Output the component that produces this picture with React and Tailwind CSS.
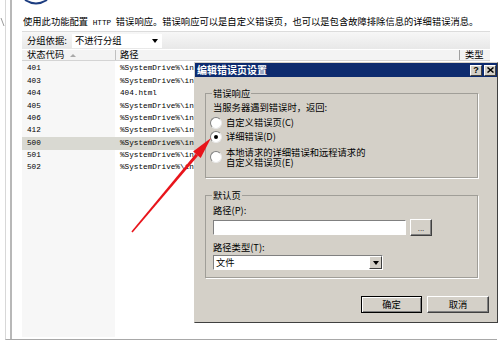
import React from 'react'

const rows = [
  { code: '401', path: '%SystemDrive%\\in' },
  { code: '403', path: '%SystemDrive%\\in' },
  { code: '404', path: '404.html' },
  { code: '405', path: '%SystemDrive%\\in' },
  { code: '406', path: '%SystemDrive%\\in' },
  { code: '412', path: '%SystemDrive%\\in' },
  { code: '500', path: '%SystemDrive%\\in', sel: true },
  { code: '501', path: '%SystemDrive%\\in' },
  { code: '502', path: '%SystemDrive%\\in' },
]

export default function App() {
  return (
    <div className="relative w-[500px] h-[342px] bg-white overflow-hidden text-black font-['Noto_Sans_CJK_SC',sans-serif]">
      <div className="flex h-[340px]">
        {/* left edge */}
        <div className="w-[5px] pt-[18px]">
          <svg width="5" height="9" className="block">
            <path d="M1 0 L4 8" stroke="#9a9a9a" strokeWidth="1" />
          </svg>
        </div>
        <div className="flex w-[492px] border-l border-b border-l-[#d8d8d8] border-b-[#a8a8a8]">
          <div className="w-[4px]" />
          <div className="w-[2px] bg-[#b8b8b8]" />
          <div className="flex-1 min-w-0 pl-[10px] pr-[7px] flex flex-col">

            {/* header text */}
            <div className="h-[31px] flex flex-col">
              <svg width="24" height="5" className="block ml-[2px]">
                <path d="M1 0 Q12 7 23 0" stroke="#1c3c80" strokeWidth="2" fill="none" />
              </svg>
              <div className="mt-[9px] pl-[1px] text-[9.3px] leading-[14px] whitespace-nowrap">
                使用此功能配置<span className="font-['Liberation_Mono',monospace] text-[7.7px]"> HTTP </span>错误响应。错误响应可以是自定义错误页，也可以是包含故障排除信息的详细错误消息。
              </div>
            </div>

            {/* group bar */}
            <div className="h-[18px] flex items-center px-[5px] text-[9.3px] leading-none bg-gradient-to-b from-[#f7f7f7] to-[#e8e8e8] border-t border-[#dcdcdc]">
              <span className="w-[45px]">分组依据:</span>
              <div className="w-[90px] h-[14px] bg-white flex items-center justify-between pl-[3px] pr-[4px]">
                <span>不进行分组</span>
                <span className="w-0 h-0 border-l-[3px] border-r-[3px] border-t-[4px] border-l-transparent border-r-transparent border-t-black" />
              </div>
            </div>

            {/* column headers */}
            <div className="mt-[1px] h-[11px] flex items-stretch bg-[#f3f3f3] border-b border-[#d4d4d4] text-[9.3px] leading-none">
              <div className="w-[93px] pl-[5px] flex items-center">
                <span>状态代码</span>
                <span className="ml-[6px] w-0 h-0 border-l-[3px] border-r-[3px] border-b-[3px] border-l-transparent border-r-transparent border-b-[#a8a8a8]" />
              </div>
              <div className="w-[344px] border-l border-[#c0c0c0] pl-[4px] flex items-center">路径</div>
              <div className="flex-1 border-l border-[#a0a0a0] pl-[5px] flex items-center">类型</div>
            </div>

            {/* rows */}
            <div className="flex-1 flex flex-col">
              <div className="grid grid-cols-[93px_1fr] h-[2px]">
                <div className="bg-[#f7f7f7]" />
                <div />
              </div>
              {rows.map(r => (
                <div key={r.code}
                     className={`grid grid-cols-[93px_1fr] h-[12.4px] font-['Liberation_Mono',monospace] text-[7.7px] leading-none ${r.sel ? 'bg-[#d9d9d2]' : ''}`}>
                  <div className={`pl-[5px] flex items-center ${r.sel ? '' : 'bg-[#f7f7f7]'}`}>{r.code}</div>
                  <div className="pl-[5px] flex items-center whitespace-nowrap">{r.path}</div>
                </div>
              ))}
              <div className="flex-1 grid grid-cols-[93px_1fr] pb-[2px]">
                <div className="bg-[#f7f7f7]" />
                <div />
              </div>
            </div>
          </div>
        </div>
      </div>

      <ErrorPageDialog />
      <Arrow />
    </div>
  )
}

function ErrorPageDialog() {
  return (
    <div className="absolute left-[194px] top-[62px] w-[304px] h-[261px] bg-[#d4d0c8] border border-t-[#d4d0c8] border-l-[#d4d0c8] border-r-[#404040] border-b-[#404040] flex flex-col text-[9.3px]">
      {/* title */}
      <div className="h-[14px] bg-[#0c2a6e] flex items-center justify-between pl-[2px] pr-[1px]">
        <span className="text-white font-bold text-[10px] leading-none">编辑错误页设置</span>
        <div className="flex gap-[2px]">
          <TitleBtn><span className="font-['Liberation_Sans',sans-serif] font-bold text-[9px] leading-none">?</span></TitleBtn>
          <TitleBtn>
            <svg width="7" height="6" className="block">
              <path d="M0.5 0.5 L6.5 5.5 M6.5 0.5 L0.5 5.5" stroke="#000" strokeWidth="1.5" />
            </svg>
          </TitleBtn>
        </div>
      </div>

      {/* 错误响应 */}
      <fieldset className="mt-[9px] ml-[10px] w-[273px] pb-[10px] border border-[#a09e98] shadow-[1px_1px_#ffffff]">
        <legend className="ml-[6px] px-[1px] leading-[14px]">错误响应</legend>
        <div className="pl-[7px] leading-[14px]">当服务器遇到错误时，返回:</div>
        <div className="mt-[2px] pl-[4px] h-[14px] flex items-center gap-[4px]">
          <Radio />
          <span>自定义错误页(C)</span>
        </div>
        <div className="pl-[4px] h-[14px] flex items-center gap-[4px]">
          <Radio checked />
          <span>详细错误(D)</span>
        </div>
        <div className="mt-[3px] pl-[4px] flex items-center gap-[4px]">
          <Radio />
          <div className="leading-[10px]">
            <div>本地请求的详细错误和远程请求的</div>
            <div>自定义错误页(E)</div>
          </div>
        </div>
      </fieldset>

      {/* 默认页 */}
      <fieldset className="mt-[10px] ml-[10px] w-[273px] pb-[7px] border border-[#a09e98] shadow-[1px_1px_#ffffff]">
        <legend className="ml-[6px] px-[1px] leading-[14px]">默认页</legend>
        <div className="mt-[1px] pl-[7px] leading-[14px]">路径(P):</div>
        <div className="mt-[2px] pl-[7px] h-[17px] flex items-center gap-[4px]">
          <div className="w-[193px] h-[15px] bg-white border border-t-[#808080] border-l-[#808080] border-r-white border-b-white" />
          <div className="w-[22px] h-[17px] flex items-center justify-center border border-t-white border-l-white border-r-[#404040] border-b-[#404040] shadow-[inset_-1px_-1px_#808080] text-[8px] leading-none text-[#555]">...</div>
        </div>
        <div className="mt-[4px] pl-[7px] leading-[14px]">路径类型(T):</div>
        <div className="mt-[1px] ml-[7px] w-[170px] h-[15px] bg-white flex items-center justify-between border border-t-[#808080] border-l-[#808080] border-r-white border-b-white">
          <span className="pl-[2px] leading-none">文件</span>
          <div className="w-[13px] h-[13px] bg-[#d4d0c8] flex items-center justify-center border border-t-white border-l-white border-r-[#404040] border-b-[#404040]">
            <span className="w-0 h-0 border-l-[3px] border-r-[3px] border-t-[4px] border-l-transparent border-r-transparent border-t-black" />
          </div>
        </div>
      </fieldset>

      {/* buttons */}
      <div className="mt-[18px] pr-[8px] flex justify-end gap-[5px]">
        <div className="w-[61px] h-[17px] flex items-center justify-center border border-black shadow-[inset_1px_1px_#ffffff,inset_-1px_-1px_#808080] leading-none">确定</div>
        <div className="w-[62px] h-[17px] flex items-center justify-center border border-t-white border-l-white border-r-[#404040] border-b-[#404040] shadow-[inset_-1px_-1px_#808080] leading-none">取消</div>
      </div>
    </div>
  )
}

function TitleBtn({ children }) {
  return (
    <div className="w-[12px] h-[11px] bg-[#d4d0c8] flex items-center justify-center border border-t-white border-l-white border-r-[#404040] border-b-[#404040]">
      {children}
    </div>
  )
}

function Radio({ checked }) {
  return (
    <span className="w-[12px] h-[12px] shrink-0 rounded-full bg-white border border-t-[#808080] border-l-[#808080] border-r-[#e8e8e8] border-b-[#e8e8e8] flex items-center justify-center">
      {checked && <span className="w-[4px] h-[4px] rounded-full bg-black" />}
    </span>
  )
}

function Arrow() {
  return (
    <svg width="500" height="342" className="absolute left-0 top-0 pointer-events-none">
      <polygon points="132.6,232.5 131.4,231.5 195.7,153.8 198.1,155.8" fill="#e8141b" />
      <polygon points="211,138 200.7,158 193.1,151.6" fill="#e8141b" />
    </svg>
  )
}
